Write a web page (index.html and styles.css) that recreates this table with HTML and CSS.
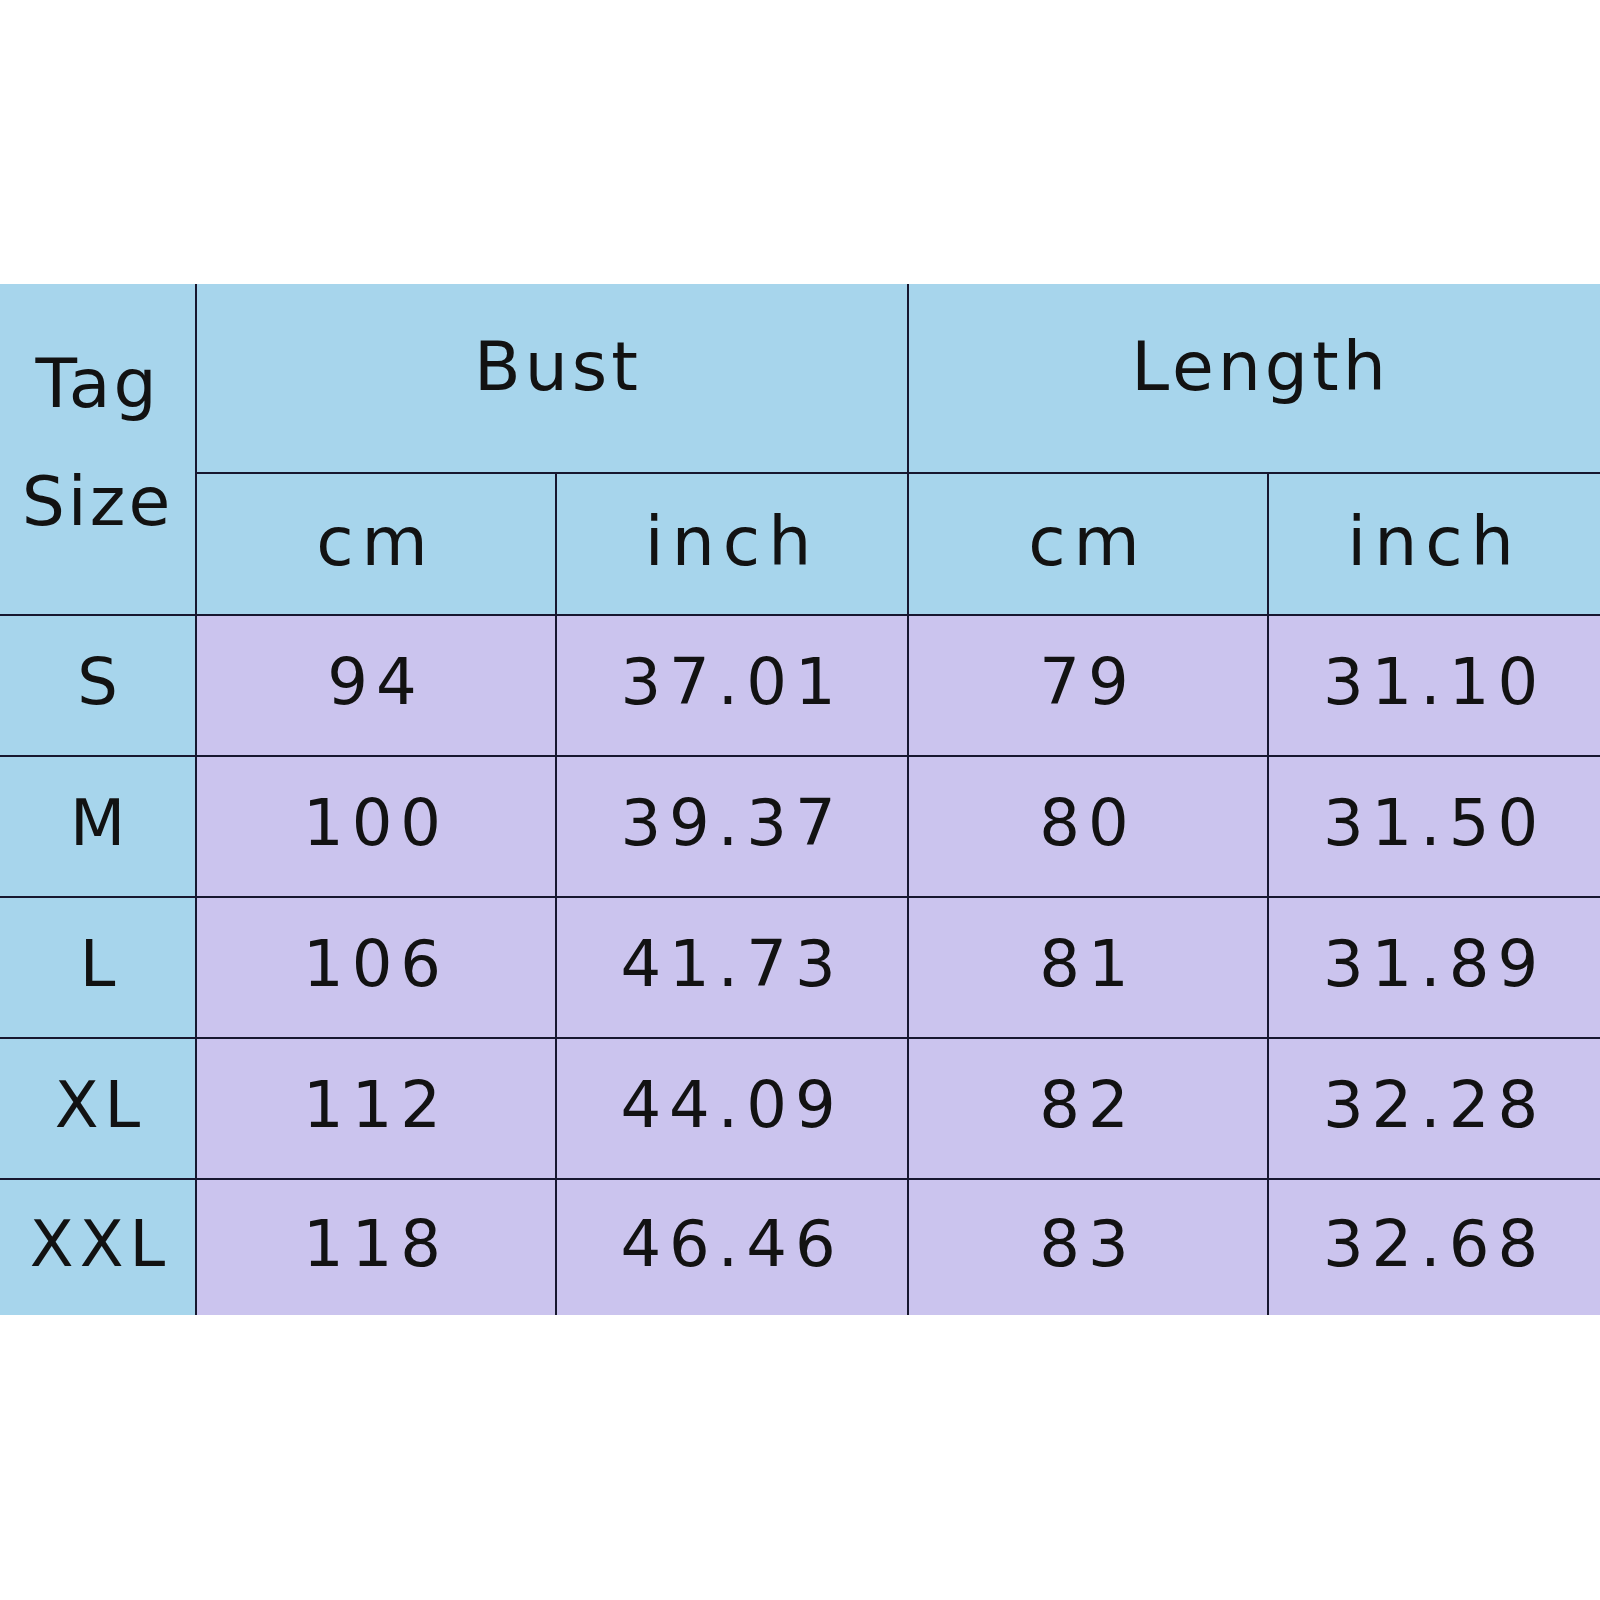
FILE: index.html
```html
<!DOCTYPE html>
<html lang="en">
<head>
<meta charset="utf-8">
<title>Size chart</title>
<link rel="stylesheet" href="styles.css">
</head>
<body>
<table class="chart">
  <colgroup>
    <col class="c-tag">
    <col class="c-bcm">
    <col class="c-bin">
    <col class="c-lcm">
    <col class="c-lin">
  </colgroup>
  <tr class="r-h1">
    <td class="head tag" rowspan="2">Tag<br>Size</td>
    <td class="head big" colspan="2">Bust</td>
    <td class="head big" colspan="2">Length</td>
  </tr>
  <tr class="r-h2">
    <td class="head unit">cm</td>
    <td class="head unit">inch</td>
    <td class="head unit">cm</td>
    <td class="head unit">inch</td>
  </tr>
  <tr class="r-d">
    <td class="size">S</td><td>94</td><td>37.01</td><td>79</td><td>31.10</td>
  </tr>
  <tr class="r-d">
    <td class="size">M</td><td>100</td><td>39.37</td><td>80</td><td>31.50</td>
  </tr>
  <tr class="r-d">
    <td class="size">L</td><td>106</td><td>41.73</td><td>81</td><td>31.89</td>
  </tr>
  <tr class="r-d">
    <td class="size">XL</td><td>112</td><td>44.09</td><td>82</td><td>32.28</td>
  </tr>
  <tr class="r-last">
    <td class="size">XXL</td><td>118</td><td>46.46</td><td>83</td><td>32.68</td>
  </tr>
</table>
</body>
</html>
```

FILE: styles.css
```css
html, body {
  margin: 0;
  padding: 0;
  background: #ffffff;
}

.chart {
  margin-top: 284px;
  width: 1600px;
  table-layout: fixed;
  border-collapse: collapse;
  border-style: hidden;
  font-family: "DejaVu Sans", sans-serif;
  color: #121212;
}

.c-tag { width: 196px; }
.c-bcm { width: 360px; }
.c-bin { width: 352px; }
.c-lcm { width: 360px; }
.c-lin { width: 332px; }

.chart td {
  border: 2px solid #17172f;
  background: #cbc4ee;
  text-align: center;
  vertical-align: middle;
  padding: 0 0 8px 0;
  font-size: 64px;
  letter-spacing: 8px;
  line-height: 1;
}

.chart td.head,
.chart td.size {
  background: #a7d5ec;
}

.chart td.size {
  letter-spacing: 6px;
  padding-left: 6px;
}

.chart td.head {
  font-size: 68px;
  letter-spacing: 4px;
  padding-bottom: 0;
}

.chart td.unit {
  letter-spacing: 8px;
  padding-bottom: 4px;
}

.chart td.big {
  padding-bottom: 22px;
  padding-left: 12px;
}

.chart td.tag {
  line-height: 118px;
  padding-bottom: 12px;
  letter-spacing: 3px;
}

.r-h1 { height: 189px; }
.r-h2 { height: 142px; }
.r-d { height: 141px; }
.r-last { height: 136px; }
```
